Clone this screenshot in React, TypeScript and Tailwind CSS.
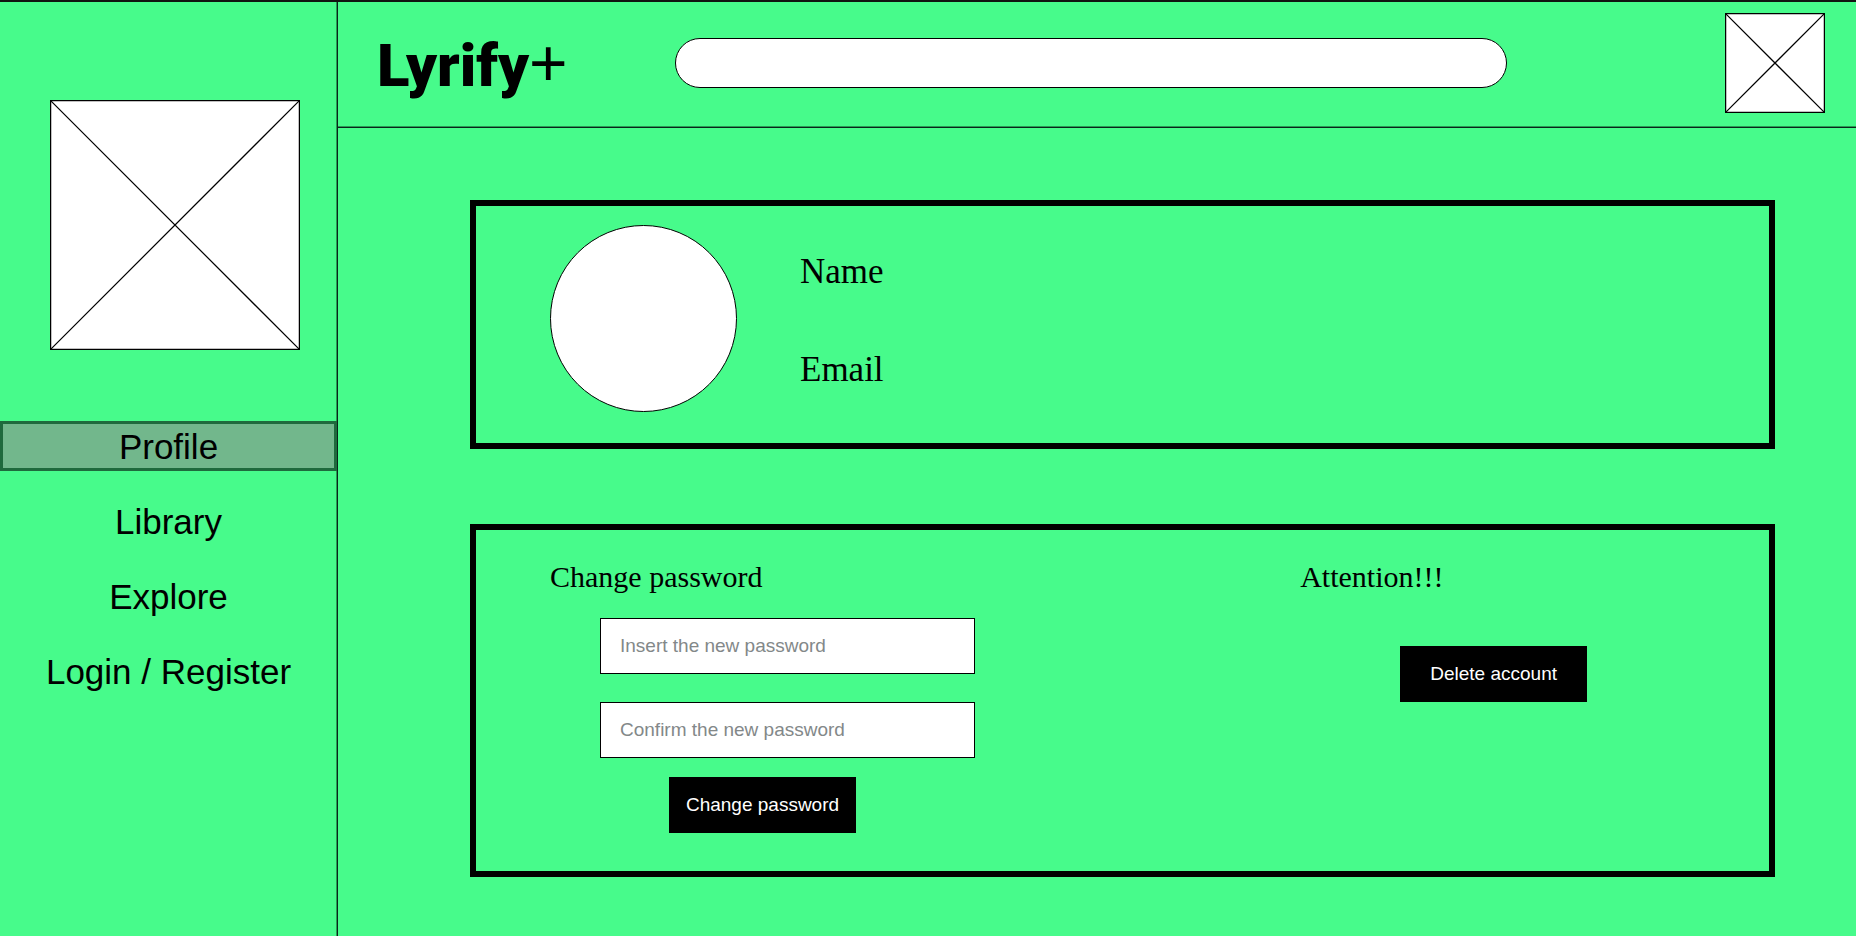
function Placeholder({ units, className }: { units: number; className: string }) {
  return (
    <svg viewBox={`0 0 ${units} ${units}`} className={className} aria-hidden="true">
      <rect x="0.5" y="0.5" width={units - 1} height={units - 1} fill="#fff" stroke="#000" />
      <path d={`M.5 .5L${units - 0.5} ${units - 0.5}M${units - 0.5} .5L.5 ${units - 0.5}`} stroke="#000" />
    </svg>
  );
}

const links = ["Profile", "Library", "Explore", "Login / Register"];

function Sidebar() {
  return (
    <aside className="w-[338px] shrink-0 border-r border-[#08251a] pt-[98px] shadow-[inset_-1px_0_0_#2a9955]">
      <Placeholder units={200} className="ml-[50px] size-[250px]" />
      <nav className="mt-[71px] flex flex-col gap-[25px]">
        {links.map((label, i) => (
          <a
            key={label}
            href="#"
            className={
              i === 0
                ? "flex h-[50px] items-center justify-center border-[3px] border-[#1f6a3d] bg-[#72b78c] pt-0.5 text-[35px]"
                : "flex h-[50px] items-center justify-center pt-0.5 text-[35px]"
            }
          >
            {label}
          </a>
        ))}
      </nav>
    </aside>
  );
}

function Header() {
  return (
    <header className="flex h-[126px] items-start border-b border-[#08251a] shadow-[inset_0_-1px_0_#2a9955]">
      <h1 className="w-[337px] shrink-0 pt-[26px] pl-[39px] font-['Roboto','Liberation_Sans',sans-serif] text-[60px] leading-[70px] font-black">
        Lyrify<span className="font-['Liberation_Sans',sans-serif] text-[66px] font-normal">+</span>
      </h1>
      <input
        type="search"
        aria-label="Search"
        className="mt-9 h-[50px] min-w-0 flex-1 rounded-full border border-black bg-white px-6 text-[19px] outline-none"
      />
      <Placeholder units={80} className="mt-[11px] mr-[31px] ml-[218px] size-[100px] shrink-0" />
    </header>
  );
}

const field =
  "ml-[50px] h-14 w-[375px] border border-black bg-white px-[19px] text-[19px] outline-none placeholder:text-[#838889]";
const button = "h-14 w-[187px] bg-black text-[19px] whitespace-nowrap text-white";
const heading = "font-['Liberation_Serif',serif] text-[30px] leading-8";

export default function App() {
  return (
    <div className="flex min-h-screen border-t-2 border-[#111411] bg-[#47fb8b] font-['Liberation_Sans',Arial,sans-serif] text-black">
      <Sidebar />
      <div className="min-w-0 flex-1">
        <Header />
        <main className="flex flex-col gap-[75px] pt-[72px] pr-[81px] pb-[59px] pl-[132px]">
          <section className="flex gap-[63px] border-[6px] border-black pt-[19px] pb-[31px] pl-[74px]">
            <div className="size-[187px] shrink-0 rounded-full border border-black bg-white" />
            <div className="flex flex-col gap-[58px] pt-[27px] font-['Liberation_Serif',serif] text-[35px] leading-10">
              <p>Name</p>
              <p>Email</p>
            </div>
          </section>
          <section className="grid grid-cols-[8fr_5fr] border-[6px] border-black pt-[31px] pb-[38px] pl-[74px]">
            <form className="flex flex-col items-start" onSubmit={(e) => e.preventDefault()}>
              <h2 className={heading}>Change password</h2>
              <input
                type="password"
                aria-label="New password"
                placeholder="Insert the new password"
                className={`${field} mt-[25px]`}
              />
              <input
                type="password"
                aria-label="Confirm password"
                placeholder="Confirm the new password"
                className={`${field} mt-7`}
              />
              <button type="submit" className={`${button} mt-[19px] ml-[119px]`}>
                Change password
              </button>
            </form>
            <div className="flex flex-col items-start">
              <h2 className={heading}>Attention!!!</h2>
              <button type="button" className={`${button} mt-[53px] ml-[100px]`}>
                Delete account
              </button>
            </div>
          </section>
        </main>
      </div>
    </div>
  );
}
